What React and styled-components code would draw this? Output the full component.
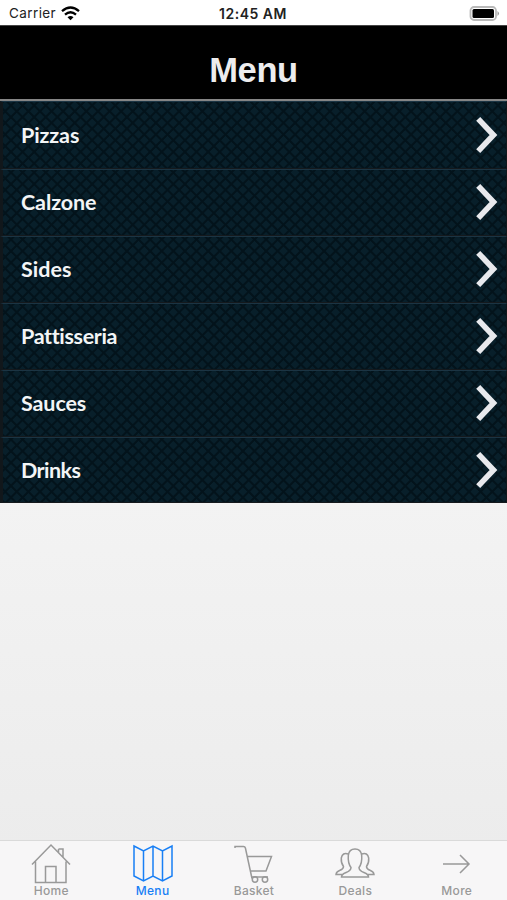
import React from "react";
import styled, { createGlobalStyle } from "styled-components";

const GlobalStyle = createGlobalStyle`
  * { box-sizing: border-box; }
  body { margin: 0; background: #efefef; }
`;

const Screen = styled.div`
  display: flex;
  flex-direction: column;
  width: 507px;
  height: 900px;
  overflow: hidden;
  background: linear-gradient(#f3f3f3 500px, #ebebeb);
  font-family: Inter, "Liberation Sans", sans-serif;
`;

const StatusBar = styled.div`
  display: grid;
  grid-template-columns: 1fr auto 1fr;
  align-items: center;
  height: 25px;
  padding: 1px 7px 0 9px;
  background: #fff;
  color: #222;
  font-size: 13.5px;
`;

const Carrier = styled.div`
  display: flex;
  align-items: center;
  gap: 5px;
  letter-spacing: 0.4px;
`;

const Clock = styled.div`
  margin-right: 3px;
  font-size: 14px;
  font-weight: 600;
  letter-spacing: 0.5px;
`;

const BatteryIcon = styled.svg`
  justify-self: end;
  display: block;
`;

const Header = styled.header`
  height: 76px;
  display: flex;
  align-items: center;
  justify-content: center;
  padding-top: 14px;
  background: #000;
  border-top: 1px solid #444;
  border-bottom: 2px solid #858585;
`;

const Title = styled.h1`
  margin: 0;
  color: #ededee;
  font: 700 34.5px/40px "Liberation Sans", sans-serif;
  letter-spacing: -0.4px;
`;

const List = styled.ul`
  margin: 0;
  padding: 0;
  list-style: none;
  flex: none;
`;

const Row = styled.li`
  display: flex;
  align-items: center;
  justify-content: space-between;
  height: 67px;
  padding: 0 8.5px 2px 18px;
  border-top: 1px solid #1b3443;
  border-bottom: 1px solid #14191d;
  border-left: 3px solid #11171b;
  border-right: 1px solid #11171b;
  background-color: #081f2a;
  background-image:
    repeating-linear-gradient(45deg, #03131b 0 1.2px, transparent 2.2px 7.4px, #03131b 8.2px),
    repeating-linear-gradient(-45deg, #03131b 0 1.2px, transparent 2.2px 7.4px, #03131b 8.2px);

  &:first-child {
    height: 68px;
    padding-bottom: 0;
  }

  &:last-child {
    height: 66px;
    padding-bottom: 0;
  }
`;

const Label = styled.span`
  color: #f3f5f6;
  font: 700 21.5px/28px Lato, sans-serif;
  font-variant-ligatures: none;
  letter-spacing: ${(p) => p.$track}px;
`;

const TabBar = styled.nav`
  display: grid;
  grid-template-columns: repeat(5, 1fr);
  height: 60px;
  margin-top: auto;
  background: #f7f6f7;
  border-top: 1px solid #dadada;
`;

const Tab = styled.div`
  display: flex;
  flex-direction: column;
  align-items: center;
  padding-left: 1px;
  color: ${(p) => (p.$active ? "#187ff5" : "#999")};
`;

const TabIcon = styled.svg`
  display: block;
  width: 44px;
  height: 43px;
  flex: none;
  fill: none;
  stroke: currentColor;
  stroke-width: 1.5;
`;

const TabLabel = styled.span`
  font-size: 12px;
  line-height: 14px;
  font-weight: 500;
  letter-spacing: 0.3px;
`;

const categories = [
  { name: "Pizzas", track: -0.1 },
  { name: "Calzone", track: -0.1 },
  { name: "Sides", track: 0 },
  { name: "Pattisseria", track: -0.35 },
  { name: "Sauces", track: -0.1 },
  { name: "Drinks", track: -0.55 },
];

const tabs = [
  {
    name: "Home",
    icon: <path d="M3 23 22 3.500 41 23M6.500 20V41H37V20M16.500 41V25H27V41M29.500 7.500H34V15.500M29.500 7.500V11" />,
  },
  {
    name: "Menu",
    active: true,
    icon: <path d="M3 4.500 12.500 9.500 22 4.500 31.500 9.500 41 4.500V34.500L31.500 39.500 22 34.500 12.500 39.500 3 34.500ZM12.500 9.500V39.500M22 4.500V34.500M31.500 9.500V39.500" />,
  },
  {
    name: "Basket",
    icon: (
      <>
        <path d="M3 6.500V5H11.500Q13 5 13.400 6.500L20 37M15.500 15H39.500L34 29.500H18.500M20 35.500H36" />
        <circle cx="23" cy="38" r="2.700" />
        <circle cx="33" cy="38" r="2.700" />
      </>
    ),
  },
  {
    name: "Deals",
    icon: (
      <path d="M8.500 35.500C8.500 30 18 32 18 26C15 22 15 18 15.300 14Q16 7.500 22 7.500T28.700 14C29 18 29 22 26 26C26 32 35.500 30 35.500 35.500ZM15.300 12.500Q9.500 10.500 8.300 16.500C8 20 9 23 10.500 25C10.500 30 3.500 27.500 3 33H9.500M28.700 12.500Q34.500 10.500 35.700 16.500C36 20 35 23 33.500 25C33.500 30 40.500 27.500 41 33H34.500" />
    ),
  },
  { name: "More", icon: <path d="M8 22.500H34M25 13.500 34 22.500 25 31.500" /> },
];

const WifiIcon = () => (
  <svg width="19" height="15" viewBox="0 0 19 15" fill="none" stroke="#000" strokeWidth="2.300">
    <path d="M1 5.200Q9.500-2.200 18 5.200M4 8.600Q9.500 3.800 15 8.600" />
    <path d="M6.500 11.300Q9.500 8.800 12.500 11.300L9.500 14.300Z" fill="#000" stroke="none" />
  </svg>
);

const Battery = () => (
  <BatteryIcon width="31" height="15" viewBox="0 0 31 15">
    <rect x="1.500" y="1" width="25.500" height="13" rx="3.500" fill="#fff" stroke="#b9b9b9" strokeWidth="1.800" />
    <rect x="3.500" y="3" width="21.500" height="9" rx="1.500" fill="#000" />
    <path d="M28.500 5Q31.500 7.500 28.500 10Z" fill="#999" />
  </BatteryIcon>
);

const Chevron = () => (
  <svg width="23" height="38" viewBox="0 0 23 38" fill="none">
    <path d="M3.200 2.800 18.500 19 3.200 35.200" stroke="#e8e9ed" strokeWidth="5.600" />
  </svg>
);

export default function App() {
  return (
    <>
      <GlobalStyle />
      <Screen>
        <StatusBar>
          <Carrier>
            Carrier
            <WifiIcon />
          </Carrier>
          <Clock>12:45 AM</Clock>
          <Battery />
        </StatusBar>
        <Header>
          <Title>Menu</Title>
        </Header>
        <List>
          {categories.map((c) => (
            <Row key={c.name}>
              <Label $track={c.track}>{c.name}</Label>
              <Chevron />
            </Row>
          ))}
        </List>
        <TabBar>
          {tabs.map((t) => (
            <Tab key={t.name} $active={t.active}>
              <TabIcon viewBox="0 0 44 42">{t.icon}</TabIcon>
              <TabLabel>{t.name}</TabLabel>
            </Tab>
          ))}
        </TabBar>
      </Screen>
    </>
  );
}
